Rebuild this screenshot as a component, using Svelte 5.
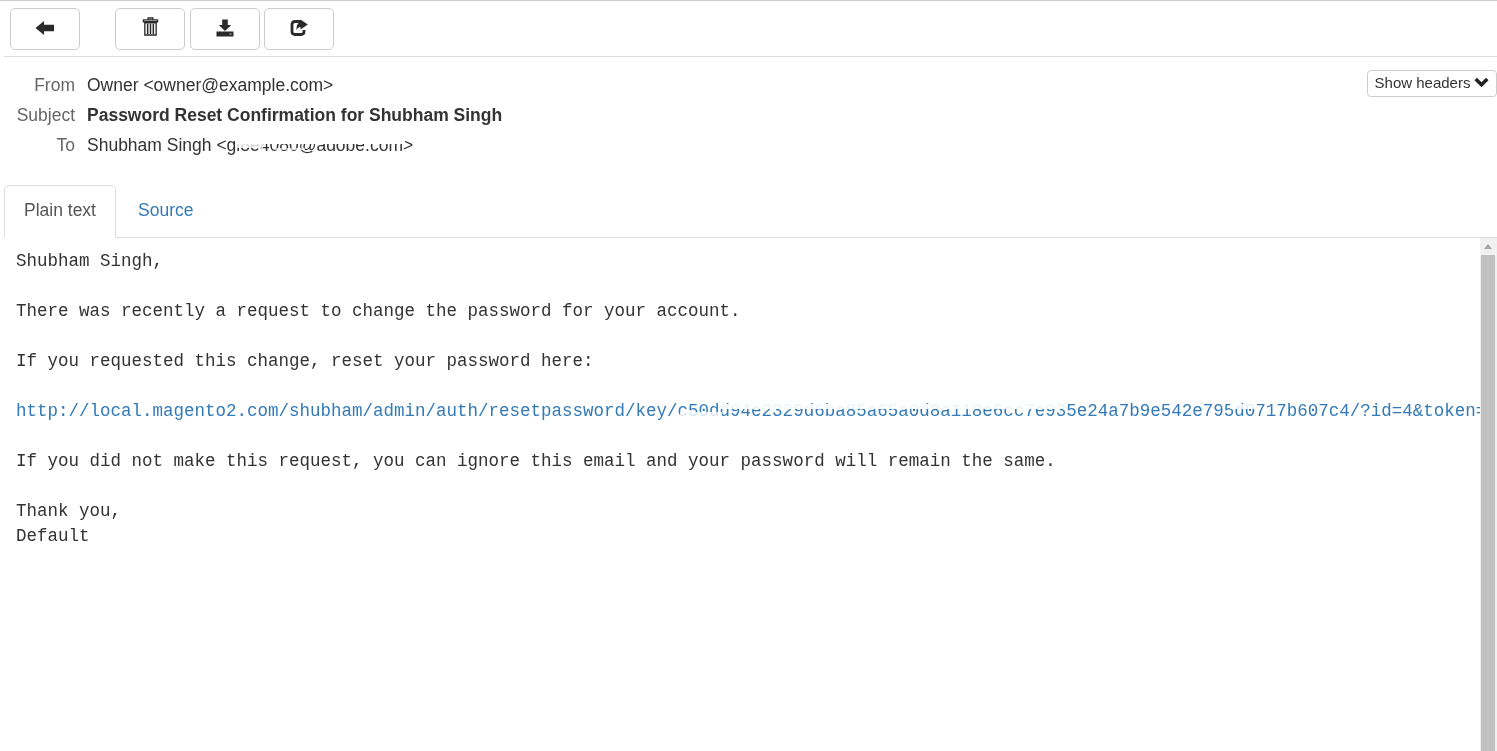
<script>
  const link = 'http://local.magento2.com/shubham/admin/auth/resetpassword/key/c50dd94e2329d6ba85a65a0d8a118e6cc7e935e24a7b9e542e795d0717b607c4/?id=4&token=aGVsbG8';
</script>

<div class="page">
  <div class="toolbar">
    <button class="tool" aria-label="Back">
      <svg viewBox="0 0 20 16" width="20" height="16"><path d="M0.5 8 L9 1 V4.8 H19 V11.2 H9 V15 Z" fill="#2a2a2a"/></svg>
    </button>
    <div class="group">
      <button class="tool trash" aria-label="Delete">
        <svg viewBox="0 0 18 20" width="17" height="19"><path d="M6.5 2.5 V1 H11.5 V2.5 M1.5 3 H16.5 V5 H1.5 Z M3 6 H15 V19 H3 Z" fill="none" stroke="#2a2a2a" stroke-width="1.4"/><path d="M6 7 V18 M9 7 V18 M12 7 V18" stroke="#2a2a2a" stroke-width="1.6"/></svg>
      </button>
      <button class="tool" aria-label="Download">
        <svg viewBox="0 0 18 18" width="18" height="18"><path d="M6.2 0.5 H11.8 V6 H15.2 L9 12 L2.8 6 H6.2 Z M0.5 12.5 H17.5 V17.5 H0.5 Z" fill="#2a2a2a"/><path d="M13.5 15 h2" stroke="#bbb" stroke-width="1"/></svg>
      </button>
      <button class="tool" aria-label="Forward">
        <svg viewBox="0 0 18 18" width="18" height="18"><path d="M11 2.5 H5 Q2 2.5 2 5.5 V12.5 Q2 15.5 5 15.5 H11 Q14 15.5 14 12.5 V11" fill="none" stroke="#2a2a2a" stroke-width="2.8"/><path d="M10.5 0.5 L17.8 5.5 L10.5 10.5 V8 Q7.5 8 6.5 11.5 Q6 4 10.5 3.2 Z" fill="#2a2a2a"/></svg>
      </button>
    </div>
  </div>

  <div class="headers">
    <div class="meta">
      <div class="row"><span class="label">From</span><span class="value">Owner &lt;owner@example.com&gt;</span></div>
      <div class="row"><span class="label">Subject</span><strong class="value">Password Reset Confirmation for Shubham Singh</strong></div>
      <div class="row"><span class="label">To</span><span class="value redacted">Shubham Singh &lt;gl8e4080@adobe.com&gt;<i class="mask mask-to"></i><i class="mask mask-to2"></i><i class="mask mask-to3"></i></span></div>
    </div>
    <button class="show">Show headers <svg viewBox="0 0 16 12" width="15" height="11"><path d="M0.3 3.5 L3 0.8 L8 5.8 L13 0.8 L15.7 3.5 L8 11.2 Z" fill="#222"/></svg></button>
  </div>

  <div class="tabs">
    <div class="tab active">Plain text</div>
    <div class="tab link-tab">Source</div>
  </div>

  <div class="pane">
    <div class="message">
      <pre>Shubham Singh,

There was recently a request to change the password for your account.

If you requested this change, reset your password here:

<span class="url"><a href="#top">{link}</a><i class="mask mask-a"></i><i class="mask mask-b"></i><i class="mask mask-c"></i></span>

If you did not make this request, you can ignore this email and your password will remain the same.

Thank you,
Default</pre>
    </div>
    <div class="scrollbar">
      <div class="arrow"></div>
      <div class="thumb"></div>
    </div>
  </div>
</div>

<style>
  :global(body) { margin: 0; background: #fff; overflow: hidden; }
  .page {
    height: 751px;
    display: flex;
    flex-direction: column;
    overflow: hidden;
    font-family: "Liberation Sans", Arial, sans-serif;
    font-size: 17.5px;
    color: #333;
    border-top: 1px solid #ccc;
    box-sizing: border-box;
    filter: blur(0.35px);
  }
  .toolbar {
    display: flex;
    gap: 35px;
    padding: 7px 0 6px 10px;
    height: 56px;
    box-sizing: border-box;
    position: relative;
  }
  .toolbar::after {
    content: "";
    position: absolute;
    left: 4px;
    right: 0;
    bottom: 0;
    height: 1px;
    background: #ddd;
  }
  .group { display: flex; gap: 5px; }
  .group .tool:last-child { margin-left: -1px; }
  .tool {
    width: 70px;
    height: 42px;
    padding: 0;
    background: #fff;
    border: 1px solid #ccc;
    border-radius: 5px;
    display: flex;
    align-items: center;
    justify-content: center;
  }
  .tool svg { display: block; margin-bottom: 3px; }
  .tool.trash svg { margin-bottom: 6px; }
  .headers {
    display: flex;
    justify-content: space-between;
    align-items: flex-start;
    height: 128px;
  }
  .meta { padding-top: 13px; }
  .row { display: flex; height: 30px; line-height: 30px; }
  .label { width: 75px; text-align: right; color: #666; margin-right: 12px; }
  .value { white-space: pre; }
  .redacted { position: relative; }
  .mask { position: absolute; background: #fff; display: block; }
  .mask-to { left: 148px; top: 7px; width: 170px; height: 7px; filter: blur(0.6px); }
  .mask-to2 { left: 150px; top: 13px; width: 26px; height: 5px; filter: blur(0.6px); opacity: .8; }
  .mask-to3 { left: 188px; top: 18px; width: 30px; height: 2px; filter: blur(0.6px); opacity: .6; }
  .show {
    margin-top: 13px;
    width: 130px;
    height: 27px;
    padding: 0;
    background: #fff;
    border: 1px solid #ccc;
    border-radius: 4px;
    font: 15px "Liberation Sans", Arial, sans-serif;
    color: #333;
    display: flex;
    align-items: center;
    justify-content: center;
    gap: 4px;
    padding-bottom: 3px;
  }
  .tabs {
    display: flex;
    height: 53px;
    box-sizing: border-box;
    border-bottom: 1px solid #ddd;
    margin-left: 4px;
  }
  .tab {
    height: 52px;
    line-height: 51px;
    padding: 0 19px;
    box-sizing: border-box;
  }
  .active {
    width: 112px;
    border: 1px solid #ddd;
    border-bottom: 1px solid #fff;
    border-radius: 5px 5px 0 0;
    background: #fff;
    height: 53px;
    line-height: 49px;
    color: #555;
    white-space: nowrap;
  }
  .link-tab { color: #337ab7; padding: 0 22px; }
  .pane { flex: 1; display: flex; min-height: 0; }
  .message { flex: 1; min-width: 0; overflow: hidden; padding: 11px 0 0 16px; }
  pre {
    margin: 0;
    font-family: "Liberation Mono", "Courier New", monospace;
    font-size: 17.5px;
    line-height: 25px;
    color: #333;
  }
  .url { position: relative; display: inline-block; }
  a { color: #337ab7; text-decoration: none; }
  .mask-a { left: 704px; top: 5px; width: 345px; height: 5px; filter: blur(0.5px); opacity: .9; }
  .mask-b { left: 664px; top: 13px; width: 42px; height: 6px; filter: blur(0.6px); opacity: .8; }
  .mask-c { left: 1214px; top: 5px; width: 27px; height: 5px; filter: blur(0.5px); opacity: .85; }
  .scrollbar {
    width: 17px;
    background: #f1f1f1;
    display: flex;
    flex-direction: column;
    align-items: center;
  }
  .arrow {
    height: 17px;
    width: 100%;
    flex: none;
    position: relative;
  }
  .arrow::after {
    content: "";
    position: absolute;
    left: 4px;
    top: 6px;
    border-left: 4px solid transparent;
    border-right: 4px solid transparent;
    border-bottom: 5px solid #a3a3a3;
  }
  .thumb { width: 14px; flex: 1; background: #c1c1c1; margin-left: -1px; }
</style>
